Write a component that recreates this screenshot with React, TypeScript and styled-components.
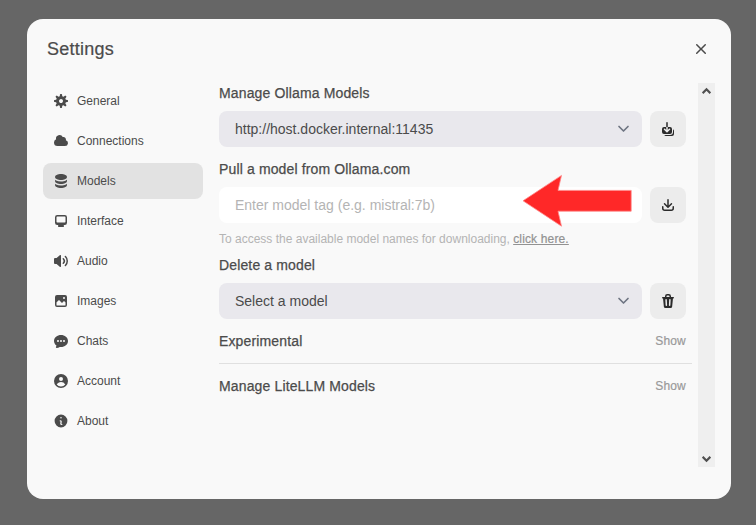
import React from "react";
import styled, { createGlobalStyle } from "styled-components";

const GlobalStyle = createGlobalStyle`
  *, *::before, *::after { box-sizing: border-box; }
  body {
    margin: 0;
    background: #666;
    color: #4b4b4b;
    font-family: "Liberation Sans", Arial, sans-serif;
    font-size: 14px;
    line-height: 20px;
  }
  button, input { font: inherit; color: inherit; border: 0; margin: 0; }
`;

const Overlay = styled.div`
  display: flex;
  width: 756px;
  height: 525px;
  padding: 19px 25px 26px 27px;
  background: #666;
  overflow: hidden;
`;

const Modal = styled.section`
  display: flex;
  flex-direction: column;
  width: 704px;
  height: 480px;
  border-radius: 16px;
  background: #f9f9f9;
`;

const Header = styled.header`
  display: flex;
  align-items: center;
  justify-content: space-between;
  height: 64px;
  padding: 0 20px 4px;
`;

const Title = styled.h1`
  margin: 0;
  font-size: 18px;
  font-weight: 500;
  line-height: 28px;
  letter-spacing: 0.25px;
  -webkit-text-stroke: 0.2px currentColor;
`;

const CloseButton = styled.button`
  display: flex;
  padding: 0;
  background: none;
`;

const Body = styled.div`
  display: flex;
  height: 384px;
  padding: 0 16px;
`;

const Tabs = styled.nav`
  display: flex;
  flex-direction: column;
  gap: 4px;
  width: 160px;
  margin-right: 16px;
`;

const Tab = styled.button<{ $active: boolean }>`
  display: flex;
  align-items: center;
  gap: 8px;
  height: 36px;
  padding: 0 10px;
  border-radius: 8px;
  background: ${(p) => (p.$active ? "#e2e2e2" : "transparent")};
  font-size: 12px;
  text-align: left;
`;

const Icon = styled.svg<{ $size: number }>`
  display: block;
  flex: none;
  width: ${(p) => p.$size}px;
  height: ${(p) => p.$size}px;
  fill: currentColor;
`;

const Content = styled.main`
  display: flex;
  flex-direction: column;
  width: 473px;
  margin-right: 6px;
`;

const Heading = styled.h2`
  margin: 0 0 8px;
  font-size: 14px;
  font-weight: 500;
  line-height: 20px;
  letter-spacing: 0.14px;
  -webkit-text-stroke: 0.25px currentColor;
`;

const FieldRow = styled.div<{ $gap: number }>`
  display: flex;
  gap: 8px;
  height: 36px;
  margin-bottom: ${(p) => p.$gap}px;
`;

const Select = styled.button`
  display: flex;
  align-items: center;
  justify-content: space-between;
  width: 423px;
  padding: 0 8px 0 16px;
  border-radius: 8px;
  background: #e9e8ed;
`;

const ChevronIcon = styled.svg<{ $color: string; $width: number }>`
  display: block;
  width: ${(p) => p.$width}px;
  fill: none;
  stroke: ${(p) => p.$color};
`;

const InputWrap = styled.div`
  position: relative;
  width: 423px;
`;

const TextInput = styled.input`
  width: 100%;
  height: 36px;
  padding: 0 16px;
  border-radius: 8px;
  outline: none;
  background: #fff;
  &::placeholder { color: #b4b4b4; opacity: 1; }
`;

const Arrow = styled.svg`
  position: absolute;
  top: -13px;
  left: 302px;
  width: 112px;
  height: 54px;
`;

const ActionButton = styled.button`
  display: flex;
  align-items: center;
  justify-content: center;
  width: 36px;
  padding: 0;
  border-radius: 8px;
  background: #ececec;
  color: #2b2b2b;
`;

const Hint = styled.p`
  margin: 0 0 8px;
  color: #b4b4b4;
  font-size: 12px;
  line-height: 16px;
`;

const HintLink = styled.a`
  color: #929292;
  letter-spacing: 0.15px;
  text-decoration: underline;
  -webkit-text-stroke: 0.2px currentColor;
`;

const SectionRow = styled.div`
  display: flex;
  justify-content: space-between;
  padding-right: 6px;
  height: 20px;
`;

const SectionTitle = styled(Heading)`
  margin: 0;
`;

const ShowButton = styled.button`
  padding: 0;
  background: none;
  color: #999;
  font-size: 12px;
  letter-spacing: 0.2px;
  -webkit-text-stroke: 0.2px currentColor;
`;

const Divider = styled.hr`
  width: 100%;
  height: 1px;
  margin: 12px 0;
  border: 0;
  background: #e0e0e0;
`;

const Scrollbar = styled.div`
  display: flex;
  flex-direction: column;
  align-items: center;
  justify-content: space-between;
  width: 17px;
  height: 384px;
  padding: 4px 0;
  background: #efefef;
`;

type Glyph = { box?: number; paths: string[] };

const glyphs: Record<string, Glyph> = {
  close: {
    box: 20,
    paths: ["M6.28 5.22a.75.75 0 00-1.06 1.06L8.94 10l-3.72 3.72a.75.75 0 101.06 1.06L10 11.06l3.72 3.72a.75.75 0 101.06-1.06L11.06 10l3.72-3.72a.75.75 0 00-1.06-1.06L10 8.94 6.28 5.22z"],
  },
  general: {
    paths: ["M6.955 1.45A.5.5 0 0 1 7.452 1h1.096a.5.5 0 0 1 .497.45l.17 1.699c.484.12.94.312 1.356.562l1.321-1.081a.5.5 0 0 1 .67.033l.774.775a.5.5 0 0 1 .034.67l-1.08 1.32c.25.417.44.873.561 1.357l1.699.17a.5.5 0 0 1 .45.497v1.096a.5.5 0 0 1-.45.497l-1.699.17c-.12.484-.312.94-.562 1.356l1.082 1.322a.5.5 0 0 1-.034.67l-.774.774a.5.5 0 0 1-.67.033l-1.322-1.08c-.416.25-.872.44-1.356.561l-.17 1.699a.5.5 0 0 1-.497.45H7.452a.5.5 0 0 1-.497-.45l-.17-1.699a4.973 4.973 0 0 1-1.356-.562L4.108 13.37a.5.5 0 0 1-.67-.033l-.774-.775a.5.5 0 0 1-.034-.67l1.08-1.32a4.971 4.971 0 0 1-.561-1.357l-1.699-.17A.5.5 0 0 1 1 8.548V7.452a.5.5 0 0 1 .45-.497l1.699-.17c.12-.484.312-.94.562-1.356L2.629 4.107a.5.5 0 0 1 .034-.67l.774-.774a.5.5 0 0 1 .67-.033L5.43 3.71a4.97 4.97 0 0 1 1.356-.561l.17-1.699ZM6 8c0 .538.212 1.026.558 1.385l.057.057a2 2 0 0 0 2.828-2.828l-.058-.056A2 2 0 0 0 6 8Z"],
  },
  cloud: {
    paths: ["M1 9.5A3.5 3.5 0 0 0 4.5 13H12a3 3 0 0 0 .917-5.857 2.503 2.503 0 0 0-3.198-3.019 3.5 3.5 0 0 0-6.628 2.171A3.5 3.5 0 0 0 1 9.5Z"],
  },
  stack: {
    paths: [
      "M8 7c3.314 0 6-1.343 6-3s-2.686-3-6-3-6 1.343-6 3 2.686 3 6 3Z",
      "M8 8.5c1.84 0 3.579-.37 4.914-1.037A6.33 6.33 0 0 0 14 6.78V8c0 1.657-2.686 3-6 3S2 9.657 2 8V6.78c.346.273.72.5 1.087.683C4.42 8.131 6.16 8.5 8 8.5Z",
      "M8 12.5c1.84 0 3.579-.37 4.914-1.037.366-.183.74-.41 1.086-.684V12c0 1.657-2.686 3-6 3s-6-1.343-6-3v-1.22c.346.273.72.5 1.087.683C4.42 12.131 6.16 12.5 8 12.5Z",
    ],
  },
  monitor: {
    paths: ["M2 4.25A2.25 2.25 0 0 1 4.25 2h7.5A2.25 2.25 0 0 1 14 4.25v5.5A2.25 2.25 0 0 1 11.75 12h-1.312c.1.128.21.248.328.36a.75.75 0 0 1 .234.545v.345a.75.75 0 0 1-.75.75h-4.5a.75.75 0 0 1-.75-.75v-.345a.75.75 0 0 1 .234-.545c.118-.111.228-.232.328-.36H4.25A2.25 2.25 0 0 1 2 9.75v-5.5Zm2.25-.75a.75.75 0 0 0-.75.75v4.5c0 .414.336.75.75.75h7.5a.75.75 0 0 0 .75-.75v-4.5a.75.75 0 0 0-.75-.75h-7.5Z"],
  },
  speaker: {
    paths: [
      "M7.557 2.066A.75.75 0 0 1 8 2.75v10.5a.75.75 0 0 1-1.248.56L3.59 11H2a1 1 0 0 1-1-1V6a1 1 0 0 1 1-1h1.59l3.162-2.81a.75.75 0 0 1 .805-.124ZM12.95 3.05a.75.75 0 1 0-1.06 1.06 5.5 5.5 0 0 1 0 7.78.75.75 0 1 0 1.06 1.06 7 7 0 0 0 0-9.9Z",
      "M10.828 5.172a.75.75 0 1 0-1.06 1.06 2.5 2.5 0 0 1 0 3.536.75.75 0 1 0 1.06 1.06 4 4 0 0 0 0-5.656Z",
    ],
  },
  image: {
    paths: ["M2 4a2 2 0 0 1 2-2h8a2 2 0 0 1 2 2v8a2 2 0 0 1-2 2H4a2 2 0 0 1-2-2V4Zm10.5 5.707a.5.5 0 0 0-.146-.353l-1-1a.5.5 0 0 0-.708 0L9.354 9.646a.5.5 0 0 1-.708 0L6.354 7.354a.5.5 0 0 0-.708 0l-2 2a.5.5 0 0 0-.146.353V12a.5.5 0 0 0 .5.5h8a.5.5 0 0 0 .5-.5V9.707ZM12 5a1 1 0 1 1-2 0 1 1 0 0 1 2 0Z"],
  },
  chat: {
    paths: ["M8 2C4.262 2 1 4.57 1 8c0 1.86.98 3.486 2.455 4.566a3.472 3.472 0 0 1-.469 1.26.75.75 0 0 0 .713 1.14 6.961 6.961 0 0 0 3.06-1.06c.403.062.818.094 1.241.094 3.738 0 7-2.57 7-6s-3.262-6-7-6ZM5 9a1 1 0 1 0 0-2 1 1 0 0 0 0 2Zm7-1a1 1 0 1 1-2 0 1 1 0 0 1 2 0ZM8 9a1 1 0 1 0 0-2 1 1 0 0 0 0 2Z"],
  },
  account: {
    paths: ["M15 8A7 7 0 1 1 1 8a7 7 0 0 1 14 0Zm-5-2a2 2 0 1 1-4 0 2 2 0 0 1 4 0ZM8 9c-1.825 0-3.422.977-4.295 2.437A5.49 5.49 0 0 0 8 13.5a5.49 5.49 0 0 0 4.294-2.063A4.997 4.997 0 0 0 8 9Z"],
  },
  info: {
    box: 20,
    paths: ["M18 10a8 8 0 1 1-16 0 8 8 0 0 1 16 0Zm-7-4a1 1 0 1 1-2 0 1 1 0 0 1 2 0ZM9 9a.75.75 0 0 0 0 1.5h.253a.25.25 0 0 1 .244.304l-.459 2.066A1.75 1.75 0 0 0 10.747 15H11a.75.75 0 0 0 0-1.5h-.253a.25.25 0 0 1-.244-.304l.459-2.066A1.75 1.75 0 0 0 9.253 9H9Z"],
  },
  update: {
    paths: [
      "M7 1a.75.75 0 0 1 .75.75V6h-1.5V1.75A.75.75 0 0 1 7 1ZM6.25 6v2.94L5.03 7.72a.75.75 0 0 0-1.06 1.06l2.5 2.5a.75.75 0 0 0 1.06 0l2.5-2.5a.75.75 0 1 0-1.06-1.06L7.75 8.94V6H10a2 2 0 0 1 2 2v3a2 2 0 0 1-2 2H4a2 2 0 0 1-2-2V8a2 2 0 0 1 2-2h2.25Z",
      "M4.268 14A2 2 0 0 0 6 15h6a2 2 0 0 0 2-2v-3a2 2 0 0 0-1-1.732V11a3 3 0 0 1-3 3H4.268Z",
    ],
  },
  download: {
    paths: [
      "M8.75 2.75a.75.75 0 0 0-1.5 0v5.69L5.03 6.22a.75.75 0 0 0-1.06 1.06l3.5 3.5a.75.75 0 0 0 1.06 0l3.5-3.5a.75.75 0 0 0-1.06-1.06L8.75 8.44V2.75Z",
      "M3.5 9.75a.75.75 0 0 0-1.5 0v1.5A2.75 2.75 0 0 0 4.75 14h6.5A2.75 2.75 0 0 0 14 11.25v-1.5a.75.75 0 0 0-1.5 0v1.5c0 .69-.56 1.25-1.25 1.25h-6.5c-.69 0-1.25-.56-1.25-1.25v-1.5Z",
    ],
  },
  trash: {
    paths: ["M5 3.25V4H2.75a.75.75 0 0 0 0 1.5h.3l.815 8.15A1.5 1.5 0 0 0 5.357 15h5.285a1.5 1.5 0 0 0 1.493-1.35l.815-8.15h.3a.75.75 0 0 0 0-1.5H11v-.75A2.25 2.25 0 0 0 8.75 1h-1.5A2.25 2.25 0 0 0 5 3.25Zm2.25-.75a.75.75 0 0 0-.75.75V4h3v-.75a.75.75 0 0 0-.75-.75h-1.5ZM6.05 6a.75.75 0 0 1 .787.713l.275 5.5a.75.75 0 0 1-1.498.075l-.275-5.5A.75.75 0 0 1 6.05 6Zm3.9 0a.75.75 0 0 1 .712.787l-.275 5.5a.75.75 0 0 1-1.498-.075l.275-5.5a.75.75 0 0 1 .786-.711Z"],
  },
};

function GlyphIcon({ name, size = 16 }: { name: string; size?: number }) {
  const { box = 16, paths } = glyphs[name];
  return (
    <Icon $size={size} viewBox={`0 0 ${box} ${box}`} aria-hidden>
      {paths.map((d) => (
        <path key={d} d={d} fillRule="evenodd" clipRule="evenodd" />
      ))}
    </Icon>
  );
}

function SelectChevron() {
  return (
    <ChevronIcon $color="#6f7583" $width={21} viewBox="0 0 21 20">
      <path d="M6 7.5l4.5 4.5 4.5-4.5" strokeWidth="1.7" strokeLinecap="round" strokeLinejoin="round" />
    </ChevronIcon>
  );
}

function ScrollChevron({ up = false }: { up?: boolean }) {
  return (
    <ChevronIcon $color="#505050" $width={9} viewBox="0 0 9 8">
      <path d={up ? "M0.6 6.2L4.5 2.3 8.4 6.2" : "M0.6 1.8L4.5 5.7 8.4 1.8"} strokeWidth="2.3" />
    </ChevronIcon>
  );
}

const tabs = [
  { label: "General", icon: "general" },
  { label: "Connections", icon: "cloud" },
  { label: "Models", icon: "stack" },
  { label: "Interface", icon: "monitor" },
  { label: "Audio", icon: "speaker" },
  { label: "Images", icon: "image" },
  { label: "Chats", icon: "chat" },
  { label: "Account", icon: "account" },
  { label: "About", icon: "info" },
];

export default function App() {
  return (
    <>
      <GlobalStyle />
      <Overlay>
        <Modal>
          <Header>
            <Title>Settings</Title>
            <CloseButton aria-label="Close">
              <GlyphIcon name="close" size={20} />
            </CloseButton>
          </Header>
          <Body>
            <Tabs>
              {tabs.map((tab) => (
                <Tab key={tab.label} $active={tab.label === "Models"}>
                  <GlyphIcon name={tab.icon} />
                  {tab.label}
                </Tab>
              ))}
            </Tabs>
            <Content>
              <Heading>Manage Ollama Models</Heading>
              <FieldRow $gap={12}>
                <Select>
                  http://host.docker.internal:11435
                  <SelectChevron />
                </Select>
                <ActionButton aria-label="Update all models">
                  <GlyphIcon name="update" />
                </ActionButton>
              </FieldRow>
              <Heading>Pull a model from Ollama.com</Heading>
              <FieldRow $gap={8}>
                <InputWrap>
                  <TextInput placeholder="Enter model tag (e.g. mistral:7b)" />
                  <Arrow viewBox="0 0 112 54">
                    <path
                      d="M2 26.8L40.5 1.4 37 16.4H110.2V37.2H37L40.5 52.2Z"
                      fill="#ff2828"
                      stroke="#ff8a8a"
                      strokeWidth="0.8"
                    />
                  </Arrow>
                </InputWrap>
                <ActionButton aria-label="Download model">
                  <GlyphIcon name="download" />
                </ActionButton>
              </FieldRow>
              <Hint>
                To access the available model names for downloading, <HintLink>click here.</HintLink>
              </Hint>
              <Heading>Delete a model</Heading>
              <FieldRow $gap={12}>
                <Select>
                  Select a model
                  <SelectChevron />
                </Select>
                <ActionButton aria-label="Delete model">
                  <GlyphIcon name="trash" />
                </ActionButton>
              </FieldRow>
              <SectionRow>
                <SectionTitle>Experimental</SectionTitle>
                <ShowButton>Show</ShowButton>
              </SectionRow>
              <Divider />
              <SectionRow>
                <SectionTitle>Manage LiteLLM Models</SectionTitle>
                <ShowButton>Show</ShowButton>
              </SectionRow>
            </Content>
            <Scrollbar>
              <ScrollChevron up />
              <ScrollChevron />
            </Scrollbar>
          </Body>
        </Modal>
      </Overlay>
    </>
  );
}
